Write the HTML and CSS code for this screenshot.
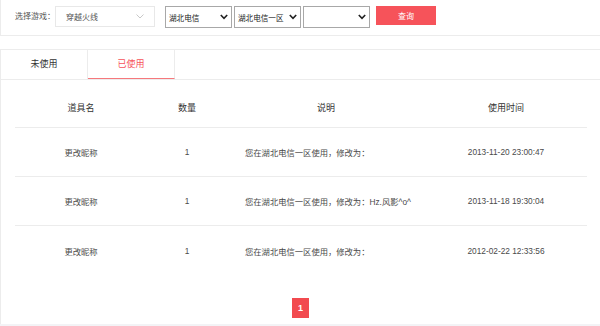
FILE: index.html
```html
<!DOCTYPE html>
<html lang="zh-CN">
<head>
    <meta charset="UTF-8">
    <meta name="viewport" content="width=device-width, initial-scale=1.0">
    <title>道具使用记录</title>
    <link rel="stylesheet" href="styles.css">
</head>
<body>
    <div class="page">
        <div class="search-bar">
            <span class="search-label">选择游戏：</span>
            <div class="game-select">
                <span>穿越火线</span>
                <svg class="arrow-light" width="8" height="5" viewBox="0 0 8 5"><path d="M0.5 0.5 L4 4 L7.5 0.5" fill="none" stroke="#c8c8c8" stroke-width="1"/></svg>
            </div>
            <div class="select-box">
                <span>湖北电信</span>
                <svg class="arrow" width="8" height="6" viewBox="0 0 8 6"><path d="M0.8 1 L4 4.4 L7.2 1" fill="none" stroke="#222" stroke-width="1.6"/></svg>
            </div>
            <div class="select-box">
                <span>湖北电信一区</span>
                <svg class="arrow" width="8" height="6" viewBox="0 0 8 6"><path d="M0.8 1 L4 4.4 L7.2 1" fill="none" stroke="#222" stroke-width="1.6"/></svg>
            </div>
            <div class="select-box">
                <span></span>
                <svg class="arrow" width="8" height="6" viewBox="0 0 8 6"><path d="M0.8 1 L4 4.4 L7.2 1" fill="none" stroke="#222" stroke-width="1.6"/></svg>
            </div>
            <button class="search-btn">查询</button>
        </div>

        <div class="record-panel">
            <div class="tabs">
                <div class="tab">未使用</div>
                <div class="tab active">已使用</div>
            </div>

            <div class="record-table">
                <div class="row head">
                    <div>道具名</div>
                    <div>数量</div>
                    <div>说明</div>
                    <div>使用时间</div>
                </div>
                <div class="row">
                    <div>更改昵称</div>
                    <div>1</div>
                    <div class="desc">您在湖北电信一区使用，修改为：</div>
                    <div>2013-11-20 23:00:47</div>
                </div>
                <div class="row">
                    <div>更改昵称</div>
                    <div>1</div>
                    <div class="desc">您在湖北电信一区使用，修改为：Hz.风影^o^</div>
                    <div>2013-11-18 19:30:04</div>
                </div>
                <div class="row last">
                    <div>更改昵称</div>
                    <div>1</div>
                    <div class="desc">您在湖北电信一区使用，修改为：</div>
                    <div>2012-02-22 12:33:56</div>
                </div>
            </div>

            <div class="pager">
                <span class="page-num">1</span>
            </div>
        </div>
    </div>
</body>
</html>
```

FILE: styles.css
```css
body {
    margin: 0;
    padding: 0;
    background: #f3f3f6;
    font-family: "Liberation Sans", "Noto Sans CJK SC", sans-serif;
    color: #444;
}

.page {
    background: #fff;
}

.search-bar {
    display: flex;
    align-items: flex-start;
    height: 36px;
    padding: 6px 0 0 14px;
    box-sizing: border-box;
    border-left: 1px solid #ececec;
    border-bottom: 1px solid #ececec;
    font-size: 8px;
}

.search-label {
    line-height: 21px;
    color: #555;
    width: 40px;
}

.game-select {
    display: flex;
    align-items: center;
    justify-content: space-between;
    width: 100px;
    height: 21px;
    box-sizing: border-box;
    padding: 0 10px 0 10px;
    border: 1px solid #e8e8e8;
    color: #555;
    margin-right: 10px;
}

.select-box {
    display: flex;
    align-items: center;
    justify-content: space-between;
    width: 67px;
    height: 22px;
    box-sizing: border-box;
    padding: 0 3px 0 3px;
    border: 1px solid #a8a8a8;
    color: #222;
    font-size: 7.6px;
    margin-right: 2px;
}

.search-btn {
    width: 60px;
    height: 19px;
    margin-left: 4px;
    border: none;
    padding: 0;
    background: #f6535a;
    color: #fff;
    font-family: inherit;
    font-size: 8px;
}

.record-panel {
    margin-top: 13px;
    border-top: 1px solid #ececec;
    border-left: 1px solid #ececec;
}

.tabs {
    display: flex;
    height: 30px;
    box-sizing: border-box;
    border-bottom: 1px solid #ececec;
}

.tab {
    width: 86px;
    line-height: 29px;
    text-align: center;
    font-size: 9px;
    color: #333;
    border-right: 1px solid #ececec;
}

.tab.active {
    color: #f6535a;
    border-bottom: 1px solid #f6787c;
}

.record-table {
    margin: 8px 13px 0 14px;
    font-size: 8.3px;
}

.row {
    display: grid;
    grid-template-columns: 132px 80px 198px 1fr;
    align-items: center;
    height: 49px;
    box-sizing: border-box;
    border-bottom: 1px solid #ececec;
    text-align: center;
    color: #4a4a4a;
}

.row.head {
    height: 40px;
    font-size: 9px;
    color: #333;
}

.row.last {
    border-bottom: none;
}

.row .desc {
    text-align: left;
    padding-left: 18px;
}

.pager {
    display: flex;
    justify-content: center;
    padding: 23px 0 6px;
}

.page-num {
    width: 17px;
    height: 20px;
    line-height: 20px;
    text-align: center;
    background: #f24a4f;
    color: #fff;
    font-size: 9px;
    font-weight: bold;
}
```
